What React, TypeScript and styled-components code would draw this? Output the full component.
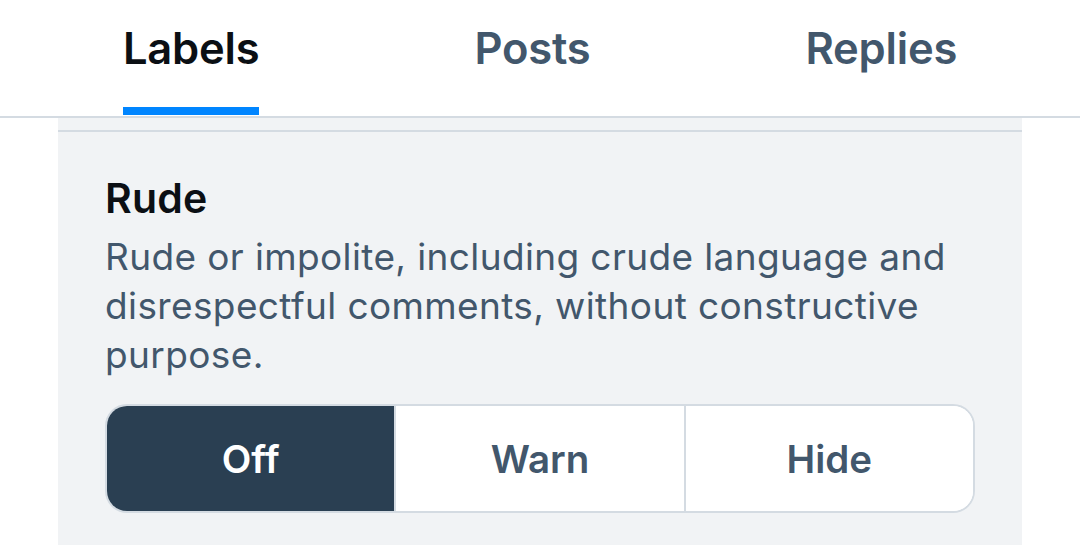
import React from "react";
import styled, { createGlobalStyle } from "styled-components";

const GlobalStyle = createGlobalStyle`
  html, body {
    margin: 0;
    padding: 0;
    background: #ffffff;
    font-family: Inter, "Noto Sans", "Liberation Sans", sans-serif;
    -webkit-font-smoothing: antialiased;
  }
  * { box-sizing: border-box; }
`;

const Page = styled.div`
  width: 1080px;
  height: 545px;
  overflow: hidden;
  display: flex;
  flex-direction: column;
  background: #ffffff;
`;

const TabBar = styled.nav`
  display: flex;
  justify-content: center;
  gap: 215px;
  height: 118px;
  border-bottom: 2px solid #d4dbe2;
  flex-shrink: 0;
`;

const Tab = styled.div<{ $active?: boolean }>`
  display: flex;
  flex-direction: column;
  align-items: stretch;
  padding-top: 20px;
  font-size: 43.5px;
  line-height: 56px;
  font-weight: 600;
  letter-spacing: -0.2px;
  color: ${(p) => (p.$active ? "#0b0f14" : "#42576c")};
`;

const Underline = styled.div<{ $active?: boolean }>`
  margin-top: auto;
  height: 8px;
  margin-bottom: 1px;
  background: ${(p) => (p.$active ? "#0085ff" : "transparent")};
`;

const Panel = styled.div`
  margin: 0 58px;
  flex: 1;
  background: #f1f3f5;
  display: flex;
  flex-direction: column;
`;

const PrevItemEnd = styled.div`
  height: 14px;
  border-bottom: 2px solid #d4dbe2;
`;

const Section = styled.section`
  display: flex;
  flex-direction: column;
  padding: 40px 47px 0;
`;

const Title = styled.h2`
  margin: 0;
  font-size: 41px;
  line-height: 52px;
  font-weight: 600;
  letter-spacing: 0.2px;
  color: #0b0f14;
`;

const Desc = styled.p`
  margin: 8px 0 0;
  font-size: 37px;
  line-height: 49px;
  font-weight: 400;
  letter-spacing: 0.38px;
  color: #42576c;
`;

const Segmented = styled.div`
  margin-top: 25px;
  display: flex;
  height: 109px;
  border: 2px solid #d4dbe2;
  border-radius: 22px;
  overflow: hidden;
  background: #ffffff;
`;

const Segment = styled.button<{ $active?: boolean }>`
  flex: 1;
  display: flex;
  align-items: center;
  justify-content: center;
  border: none;
  border-left: 2px solid #d4dbe2;
  margin: 0;
  padding: 0;
  font-family: inherit;
  font-size: 38.5px;
  font-weight: 600;
  background: ${(p) => (p.$active ? "#2a3f52" : "#ffffff")};
  color: ${(p) => (p.$active ? "#ffffff" : "#42576c")};
  &:first-child {
    border-left: none;
  }
`;

const tabs = ["Labels", "Posts", "Replies"];
const options = ["Off", "Warn", "Hide"];

export default function App() {
  const activeTab = "Labels";
  const activeOption = "Off";
  return (
    <Page>
      <GlobalStyle />
      <TabBar>
        {tabs.map((t) => (
          <Tab key={t} $active={t === activeTab}>
            {t}
            <Underline $active={t === activeTab} />
          </Tab>
        ))}
      </TabBar>
      <Panel>
        <PrevItemEnd />
        <Section>
          <Title>Rude</Title>
          <Desc>
            Rude or impolite, including crude language and disrespectful
            comments, without constructive purpose.
          </Desc>
          <Segmented>
            {options.map((o) => (
              <Segment key={o} $active={o === activeOption}>
                {o}
              </Segment>
            ))}
          </Segmented>
        </Section>
      </Panel>
    </Page>
  );
}
